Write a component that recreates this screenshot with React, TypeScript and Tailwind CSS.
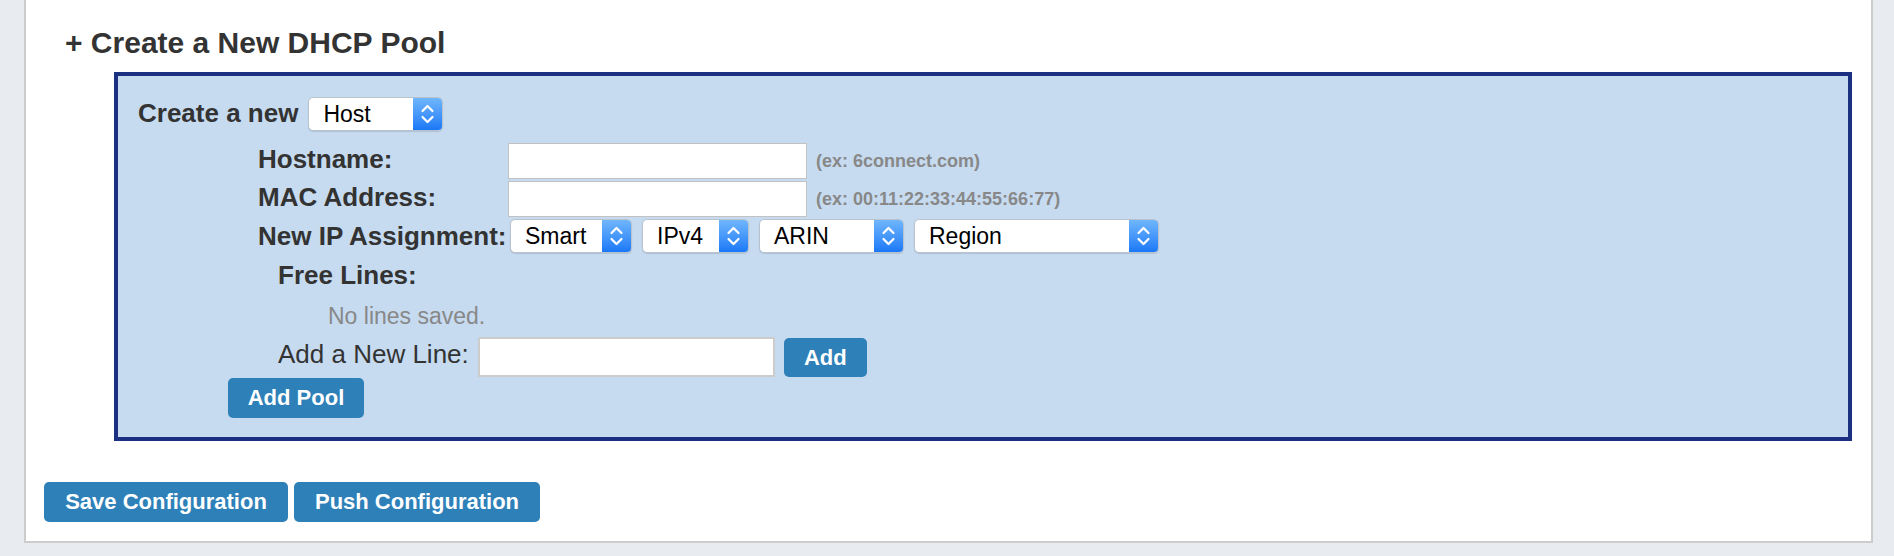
import React from "react"

function MacSelect({ label, width }: { label: string; width: string }) {
  return (
    <div
      className={`${width} h-[34px] flex items-stretch rounded-[5px] bg-white border border-[#b9c3ce] shadow-[0_1px_1px_rgba(0,0,0,0.12)] overflow-hidden shrink-0`}
    >
      <div className="flex-1 pl-[14px] text-[23px] leading-[32px] text-black">{label}</div>
      <div className="w-[29px] bg-gradient-to-b from-[#6fb6fb] to-[#1878f7] flex items-center justify-center">
        <svg width="29" height="32" viewBox="0 0 29 32" fill="none">
          <path d="M9.5 13 L14.5 8 L19.5 13" stroke="white" strokeWidth="2.2" strokeLinecap="round" strokeLinejoin="round" />
          <path d="M9.5 19 L14.5 24 L19.5 19" stroke="white" strokeWidth="2.2" strokeLinecap="round" strokeLinejoin="round" />
        </svg>
      </div>
    </div>
  )
}

function BlueButton({ children, width, height = "h-[40px]" }: { children: React.ReactNode; width: string; height?: string }) {
  return (
    <button className={`${width} ${height} rounded-[5px] bg-[#2e80b8] text-white text-[22px] font-bold leading-none shrink-0`}>
      {children}
    </button>
  )
}

function FieldRow({ label, hint }: { label: string; hint: string }) {
  return (
    <div className="flex items-center h-[36px]">
      <div className="w-[250px] text-[26px] font-bold leading-[32px] self-start whitespace-nowrap">{label}</div>
      <input className="w-[299px] h-[36px] bg-white border border-[#c2c2c2] outline-none" />
      <div className="ml-[9px] text-[18px] font-bold text-[#888888] whitespace-nowrap">{hint}</div>
    </div>
  )
}

export default function App() {
  return (
    <div className="h-[556px] w-[1894px] overflow-hidden bg-[#e8ecf0] pl-[24px] pr-[21px] pb-[13px] font-['Liberation_Sans',Arial,sans-serif] text-[#333333]">
      <div className="h-full bg-white border-x-2 border-b-2 border-[#cccccc] flex flex-col">
        <h2 className="pt-[25px] pl-[39px] text-[30px] leading-[36px] font-bold">+ Create a New DHCP Pool</h2>

        <div className="mt-[11px] ml-[88px] mr-[19px] border-4 border-[#1c3082] bg-[#c6dbf0] pt-[21px] pl-[20px] pb-[19px]">
          <div className="flex items-center gap-[10px] h-[33px]">
            <span className="text-[26px] font-bold leading-[33px]">Create a new</span>
            <MacSelect label="Host" width="w-[135px]" />
          </div>

          <div className="mt-[13px] ml-[120px] flex flex-col gap-[2px]">
            <FieldRow label="Hostname:" hint="(ex: 6connect.com)" />
            <FieldRow label="MAC Address:" hint="(ex: 00:11:22:33:44:55:66:77)" />
            <div className="flex items-center h-[34px]">
              <div className="w-[250px] text-[26px] font-bold leading-[34px] whitespace-nowrap">New IP Assignment:</div>
              <div className="flex gap-[10px] ml-[2px]">
                <MacSelect label="Smart" width="w-[122px]" />
                <MacSelect label="IPv4" width="w-[107px]" />
                <MacSelect label="ARIN" width="w-[145px]" />
                <MacSelect label="Region" width="w-[245px]" />
              </div>
            </div>
          </div>

          <div className="mt-[7px] ml-[140px] text-[26px] font-bold leading-[30px]">Free Lines:</div>
          <div className="mt-[12px] ml-[190px] text-[23px] leading-[28px] text-[#888888]">No lines saved.</div>

          <div className="mt-[7px] ml-[140px] flex items-start h-[40px]">
            <span className="text-[26px] leading-[34px] whitespace-nowrap">Add a New Line:</span>
            <input className="ml-[9px] w-[297px] h-[40px] bg-white border-2 border-[#cccccc] outline-none" />
            <div className="ml-[9px] mt-[1px]">
              <BlueButton width="w-[83px]" height="h-[39px]">Add</BlueButton>
            </div>
          </div>

          <div className="mt-[1px] ml-[90px]">
            <BlueButton width="w-[136px]">Add Pool</BlueButton>
          </div>
        </div>

        <div className="mt-[41px] ml-[18px] flex gap-[6px]">
          <BlueButton width="w-[244px]">Save Configuration</BlueButton>
          <BlueButton width="w-[246px]">Push Configuration</BlueButton>
        </div>
      </div>
    </div>
  )
}
